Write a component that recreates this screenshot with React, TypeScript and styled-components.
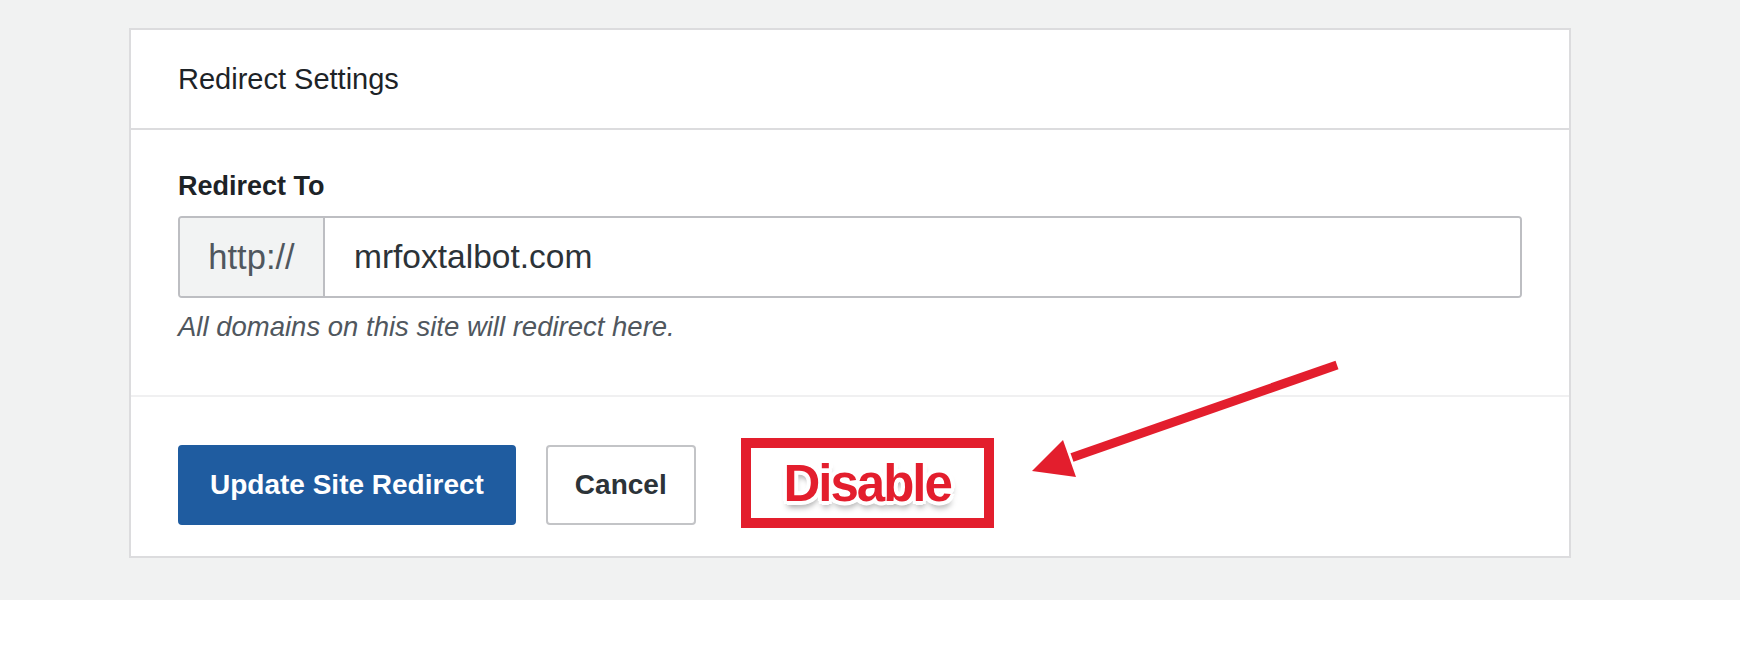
import styled, {createGlobalStyle} from 'styled-components'

const GlobalStyle = createGlobalStyle`
  html, body {
    margin: 0;
    padding: 0;
    background: #ffffff;
    font-family: 'Liberation Sans', Arial, sans-serif;
  }
  * {
    box-sizing: border-box;
  }
`

const Page = styled.div`
  position: relative;
  height: 600px;
  padding: 28px 0 0 129px;
  background: #f1f2f2;
`

const Card = styled.section`
  width: 1442px;
  background: #ffffff;
  border: 2px solid #dcdcde;
`

const CardHeader = styled.header`
  height: 100px;
  display: flex;
  align-items: center;
  padding: 0 47px;
  border-bottom: 2px solid #dcdcde;
  font-size: 29px;
  color: #1d2327;
`

const CardBody = styled.div`
  padding: 40px 47px 52px;
`

const FieldLabel = styled.label`
  display: block;
  margin-bottom: 14px;
  font-size: 27px;
  line-height: 32px;
  font-weight: 700;
  color: #1d2327;
`

const InputGroup = styled.div`
  display: flex;
  height: 82px;
  border: 2px solid #bdbec2;
  border-radius: 4px;
  overflow: hidden;
`

const Prefix = styled.span`
  flex: 0 0 145px;
  display: flex;
  align-items: center;
  justify-content: center;
  background: #f2f3f3;
  border-right: 2px solid #bdbec2;
  font-size: 34.5px;
  color: #50575e;
`

const UrlInput = styled.input`
  flex: 1;
  min-width: 0;
  border: none;
  outline: none;
  padding: 0 29px;
  background: #ffffff;
  font-family: inherit;
  font-size: 33.5px;
  color: #2c3338;
`

const HelpText = styled.p`
  margin: 13px 0 0;
  font-size: 27.5px;
  line-height: 32px;
  font-style: italic;
  color: #50575e;
`

const CardFooter = styled.footer`
  display: flex;
  align-items: center;
  gap: 30px;
  padding: 48px 47px 31px;
  border-top: 2px solid #f0f0f1;
`

const Button = styled.button<{$primary?: boolean}>`
  height: 80px;
  padding: 0 ${(p) => (p.$primary ? 30 : 27)}px;
  border: 2px solid ${(p) => (p.$primary ? '#1f5ca0' : '#c3c4c7')};
  border-radius: 4px;
  background: ${(p) => (p.$primary ? '#1f5ca0' : '#ffffff')};
  color: ${(p) => (p.$primary ? '#ffffff' : '#2c3338')};
  font-family: inherit;
  font-size: 28px;
  font-weight: 700;
  cursor: pointer;
`

const Callout = styled.div`
  width: 253px;
  height: 90px;
  margin: -7px 0 -3px 15px;
  display: flex;
  align-items: center;
  justify-content: center;
  border: 10px solid #e31e2d;
  font-size: 51px;
  font-weight: 700;
  letter-spacing: -2px;
  color: #e31e2d;
  text-shadow:
    4px 0 0 #fff,
    -4px 0 0 #fff,
    0 4px 0 #fff,
    0 -4px 0 #fff,
    3px 3px 0 #fff,
    -3px 3px 0 #fff,
    3px -3px 0 #fff,
    -3px -3px 0 #fff,
    1px 6px 6px rgba(0, 0, 0, 0.4);
`

const ArrowOverlay = styled.svg`
  position: absolute;
  left: 1020px;
  top: 350px;
  width: 330px;
  height: 135px;
  pointer-events: none;
`

export default function App() {
  return (
    <>
      <GlobalStyle />
      <Page>
        <Card>
          <CardHeader>Redirect Settings</CardHeader>
          <CardBody>
            <FieldLabel htmlFor="redirect-to">Redirect To</FieldLabel>
            <InputGroup>
              <Prefix>http://</Prefix>
              <UrlInput id="redirect-to" defaultValue="mrfoxtalbot.com" />
            </InputGroup>
            <HelpText>All domains on this site will redirect here.</HelpText>
          </CardBody>
          <CardFooter>
            <Button $primary>Update Site Redirect</Button>
            <Button>Cancel</Button>
            <Callout>Disable</Callout>
          </CardFooter>
        </Card>
        <ArrowOverlay viewBox="0 0 330 135">
          <line x1="317" y1="15" x2="52" y2="107.5" stroke="#e31e2d" strokeWidth="9" />
          <polygon points="12,121 43,90 56,127" fill="#e31e2d" />
        </ArrowOverlay>
      </Page>
    </>
  )
}
